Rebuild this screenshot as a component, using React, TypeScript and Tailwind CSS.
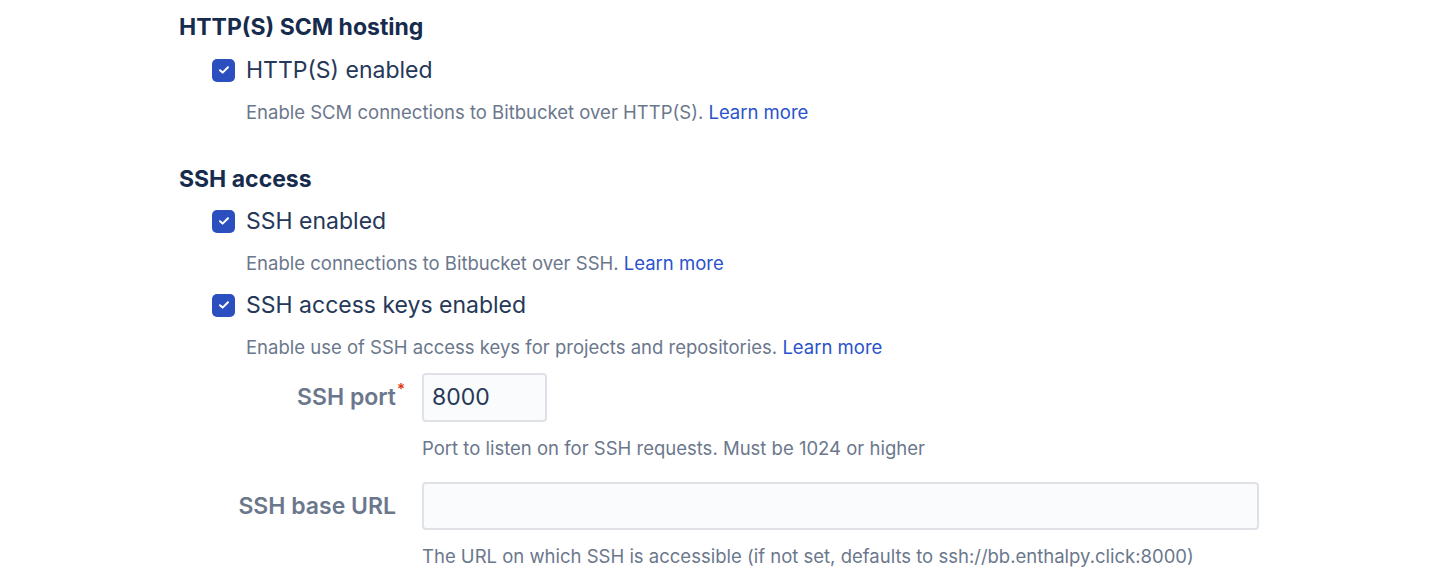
import React from "react"

function Checkbox() {
  return (
    <span className="flex h-[23px] w-[23px] shrink-0 items-center justify-center rounded-[5px] bg-[#2c4fc0]">
      <svg width="12" height="10" viewBox="0 0 12 10" fill="none">
        <path d="M2 5.2L4.6 7.6L10 2.2" stroke="white" strokeWidth="2" strokeLinecap="round" strokeLinejoin="round" />
      </svg>
    </span>
  )
}

function CheckRow({ label, className }: { label: string; className?: string }) {
  return (
    <div className={"flex h-[32px] items-center gap-[11px] pl-[33px] " + (className ?? "")}>
      <Checkbox />
      <span className="text-[23px] text-[#253858]">{label}</span>
    </div>
  )
}

function Desc({ text, className }: { text: string; className?: string }) {
  return (
    <p className={"h-[28px] pl-[67px] text-[18.5px] leading-[28px] text-[#6b778c] " + (className ?? "")}>
      {text}{" "}
      <a href="#" className="text-[#2a52cc]">Learn more</a>
    </p>
  )
}

export default function App() {
  return (
    <div className="min-h-[584px] bg-white pl-[179px] font-['Inter',sans-serif] antialiased">
      <h2 className="h-[54px] text-[23px] font-bold leading-[54px] text-[#172b4d]">HTTP(S) SCM hosting</h2>
      <CheckRow label="HTTP(S) enabled" />
      <Desc className="mt-[12px]" text="Enable SCM connections to Bitbucket over HTTP(S)." />

      <h2 className="mt-[34px] h-[38px] text-[23px] font-bold leading-[38px] text-[#172b4d]">SSH access</h2>
      <CheckRow className="mt-[7px]" label="SSH enabled" />
      <Desc className="mt-[12px]" text="Enable connections to Bitbucket over SSH." />
      <CheckRow className="mt-[12px]" label="SSH access keys enabled" />
      <Desc className="mt-[12px]" text="Enable use of SSH access keys for projects and repositories." />

      {/* SSH port */}
      <div className="mt-[12px] flex items-center gap-[26px]">
        <label className="w-[217px] text-right text-[23px] font-semibold text-[#6b778c]">
          <span className="relative">
            SSH port
            <span className="absolute -right-[9px] -top-[5px] text-[15px] text-[#de350b]">*</span>
          </span>
        </label>
        <div className="flex h-[49px] w-[125px] items-center rounded-[4px] border-2 border-[#dfe1e6] bg-[#fafbfc] px-[8px] text-[23px] text-[#253858]">
          8000
        </div>
      </div>
      <p className="ml-[243px] mt-[14px] h-[24px] text-[18.5px] leading-[24px] text-[#6b778c]">
        Port to listen on for SSH requests. Must be 1024 or higher
      </p>

      {/* SSH base URL */}
      <div className="mt-[22px] flex items-center gap-[26px]">
        <label className="w-[217px] text-right text-[23px] font-semibold text-[#6b778c]">SSH base URL</label>
        <div className="h-[48px] w-[837px] rounded-[4px] border-2 border-[#dfe1e6] bg-[#fafbfc]" />
      </div>
      <p className="ml-[243px] mt-[14px] h-[24px] text-[18.5px] leading-[24px] text-[#6b778c]">
        The URL on which SSH is accessible (if not set, defaults to ssh://bb.enthalpy.click:8000)
      </p>
    </div>
  )
}
